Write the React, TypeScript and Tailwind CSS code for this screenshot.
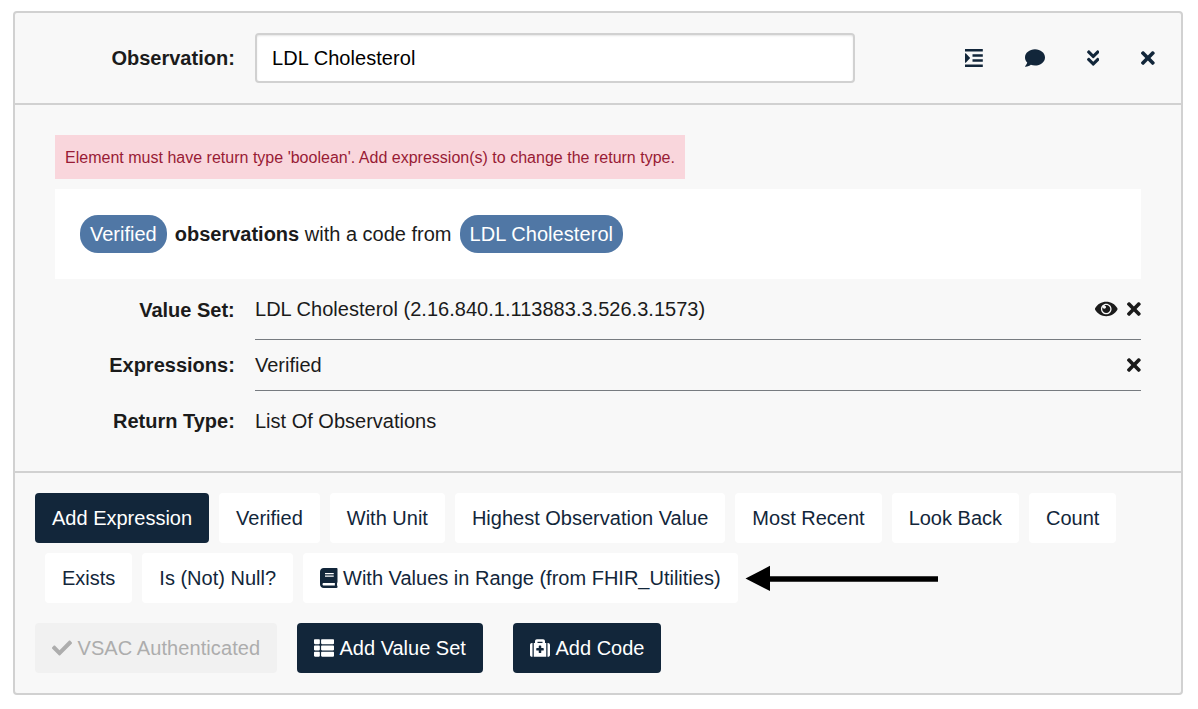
import type { ReactNode } from "react";
import {
  FaAngleDoubleDown,
  FaBook,
  FaCheck,
  FaComment,
  FaMedkit,
  FaThList,
  FaTimes,
} from "react-icons/fa";

function IndentIcon() {
  return (
    <svg viewBox="0 0 18 18" className="h-[18px] w-[18px]" fill="currentColor" aria-hidden="true">
      <path d="M0 0h17.8v2.5H0zM7.5 5.2h10.3v2.5H7.5zM7.5 10.3h10.3v2.5H7.5zM0 15.5h17.8V18H0zM0 4.4Q.5 4 1 4.4L5.2 9 1 13.6Q.5 14 0 13.6z" />
    </svg>
  );
}

function EyeIcon() {
  return (
    <svg viewBox="0 0 576 512" className="h-5 w-[22.5px]" fill="currentColor" aria-hidden="true">
      <path d="M569.354 231.631C512.969 135.949 407.81 72 288 72 168.14 72 63.004 135.994 6.646 231.631a47.999 47.999 0 0 0 0 48.739C63.031 376.051 168.19 440 288 440c119.86 0 224.996-63.994 281.354-159.631a47.997 47.997 0 0 0 0-48.738zM288 392c-75.162 0-136-60.827-136-136 0-75.162 60.826-136 136-136 75.162 0 136 60.826 136 136 0 75.162-60.826 136-136 136zm104-136c0 57.438-46.562 104-104 104s-104-46.562-104-104c0-17.708 4.431-34.379 12.236-48.973l-.001.032c0 23.651 19.173 42.823 42.824 42.823s42.824-19.173 42.824-42.823c0-23.651-19.173-42.823-42.824-42.823l-.032.001C253.621 156.431 270.292 152 288 152c57.438 0 104 46.562 104 104z" />
    </svg>
  );
}

function Arrow() {
  return (
    <svg viewBox="0 0 193 26" className="ml-[7px] h-[26px] w-[193px] shrink-0" aria-hidden="true">
      <path d="M.5 13.4 25 .8v10.4h168v5.6H25V26z" fill="#000" />
    </svg>
  );
}

function Pill({ children }: { children: ReactNode }) {
  return (
    <span className="flex h-[38px] items-center rounded-[18px] bg-[#5077a5] px-2.5 text-white">
      {children}
    </span>
  );
}

function Row({ label, className, children, actions }: {
  label: string;
  className: string;
  children: ReactNode;
  actions?: ReactNode;
}) {
  return (
    <div className={`flex items-stretch ${className}`}>
      <div className="mr-[20.2px] flex w-[179.8px] items-center justify-end font-bold">{label}</div>
      <div className="flex flex-1 items-center justify-between border-[#777b80]">
        <span>{children}</span>
        <div className="flex items-center gap-[9.5px]">{actions}</div>
      </div>
    </div>
  );
}

const button = "flex h-[50px] items-center gap-[5.5px] rounded-[4px] px-[17px] whitespace-nowrap";
const light = `${button} ml-2.5 bg-white text-[#12263a]`;
const dark = `${button} bg-[#12263a] text-white`;

const expressions = [
  "Verified",
  "With Unit",
  "Highest Observation Value",
  "Most Recent",
  "Look Back",
  "Count",
  "Exists",
  "Is (Not) Null?",
];

export default function App() {
  return (
    <div className="h-[709px] w-[1198px] bg-white pt-[11px] pl-[13px] font-['Liberation_Sans',Arial,sans-serif] text-[20px] leading-[24px] text-[#1b1b1b]">
      <section className="flex h-[684px] w-[1170px] flex-col rounded-[4px] border-2 border-[#d1d1d1] bg-[#f8f8f8]">
        <header className="flex h-[92px] items-center border-b-2 border-[#d1d1d1] pr-[26px]">
          <label htmlFor="name" className="mr-[20.2px] w-[219.8px] text-right font-bold">
            Observation:
          </label>
          <input
            id="name"
            defaultValue="LDL Cholesterol"
            className="h-[50px] w-[600px] rounded-[4px] border-2 border-[#d1d1d1] bg-white px-[15px] tracking-[0.05px] text-black shadow-[inset_0_1px_2px_rgba(0,0,0,0.1)] outline-none"
          />
          <div className="ml-auto flex items-center gap-[42px] text-[#12263a]">
            <button aria-label="Indent"><IndentIcon /></button>
            <button aria-label="Comment"><FaComment className="h-5 w-5" /></button>
            <button aria-label="Collapse"><FaAngleDoubleDown className="h-5 w-[12.5px]" /></button>
            <button aria-label="Remove"><FaTimes className="h-5 w-[13.75px]" /></button>
          </div>
        </header>

        <div className="flex h-[368px] flex-col border-b-2 border-[#d1d1d1] px-10 pt-[30px]">
          <div className="flex h-11 w-[630px] items-center bg-[#f9d6dc] px-2.5 pt-0.5 text-base tracking-[0.01px] whitespace-nowrap text-[#981b35]">
            Element must have return type 'boolean'. Add expression(s) to change the return type.
          </div>
          <div className="mt-2.5 flex h-[90px] w-[1086px] items-center bg-white px-[25px] whitespace-pre">
            <Pill>Verified</Pill>
            <b className="ml-2">observations</b>
            <span className="mr-2"> with a code from</span>
            <Pill><span className="tracking-[0.06px]">LDL Cholesterol</span></Pill>
          </div>
          <div className="w-[1086px]">
            <Row
              label="Value Set:"
              className="h-[61px] [&>div:first-child]:pt-px [&>div:last-child]:border-b"
              actions={
                <>
                  <EyeIcon />
                  <FaTimes className="h-5 w-[13.75px]" />
                </>
              }
            >
              <span className="tracking-[0.02px]">LDL Cholesterol (2.16.840.1.113883.3.526.3.1573)</span>
            </Row>
            <Row
              label="Expressions:"
              className="h-[51px] [&>div:first-child]:pb-px [&>div:last-child]:border-b"
              actions={<FaTimes className="h-5 w-[13.75px]" />}
            >
              Verified
            </Row>
            <Row label="Return Type:" className="h-[60px]">List Of Observations</Row>
          </div>
        </div>

        <footer className="flex flex-col gap-5 p-5">
          <div className="flex flex-wrap items-center gap-y-2.5">
            <button className={dark}>Add Expression</button>
            {expressions.map((name) => (
              <button key={name} className={light}>{name}</button>
            ))}
            <button className={light}>
              <FaBook className="h-5 w-[17.5px] shrink-0" />
              With Values in Range (from FHIR_Utilities)
            </button>
            <Arrow />
          </div>
          <div className="flex">
            <button className={`${button} w-[242px] bg-[#f1f1f1] text-[#adadad]`}>
              <FaCheck className="h-5 w-5 shrink-0" />
              <span className="tracking-[0.08px]">VSAC Authenticated</span>
            </button>
            <button className={`${dark} ml-5 w-[186px]`}>
              <FaThList className="h-5 w-5 shrink-0" />
              Add Value Set
            </button>
            <button className={`${dark} ml-[30px] w-[148px]`}>
              <FaMedkit className="h-5 w-5 shrink-0" />
              Add Code
            </button>
          </div>
        </footer>
      </section>
    </div>
  );
}
